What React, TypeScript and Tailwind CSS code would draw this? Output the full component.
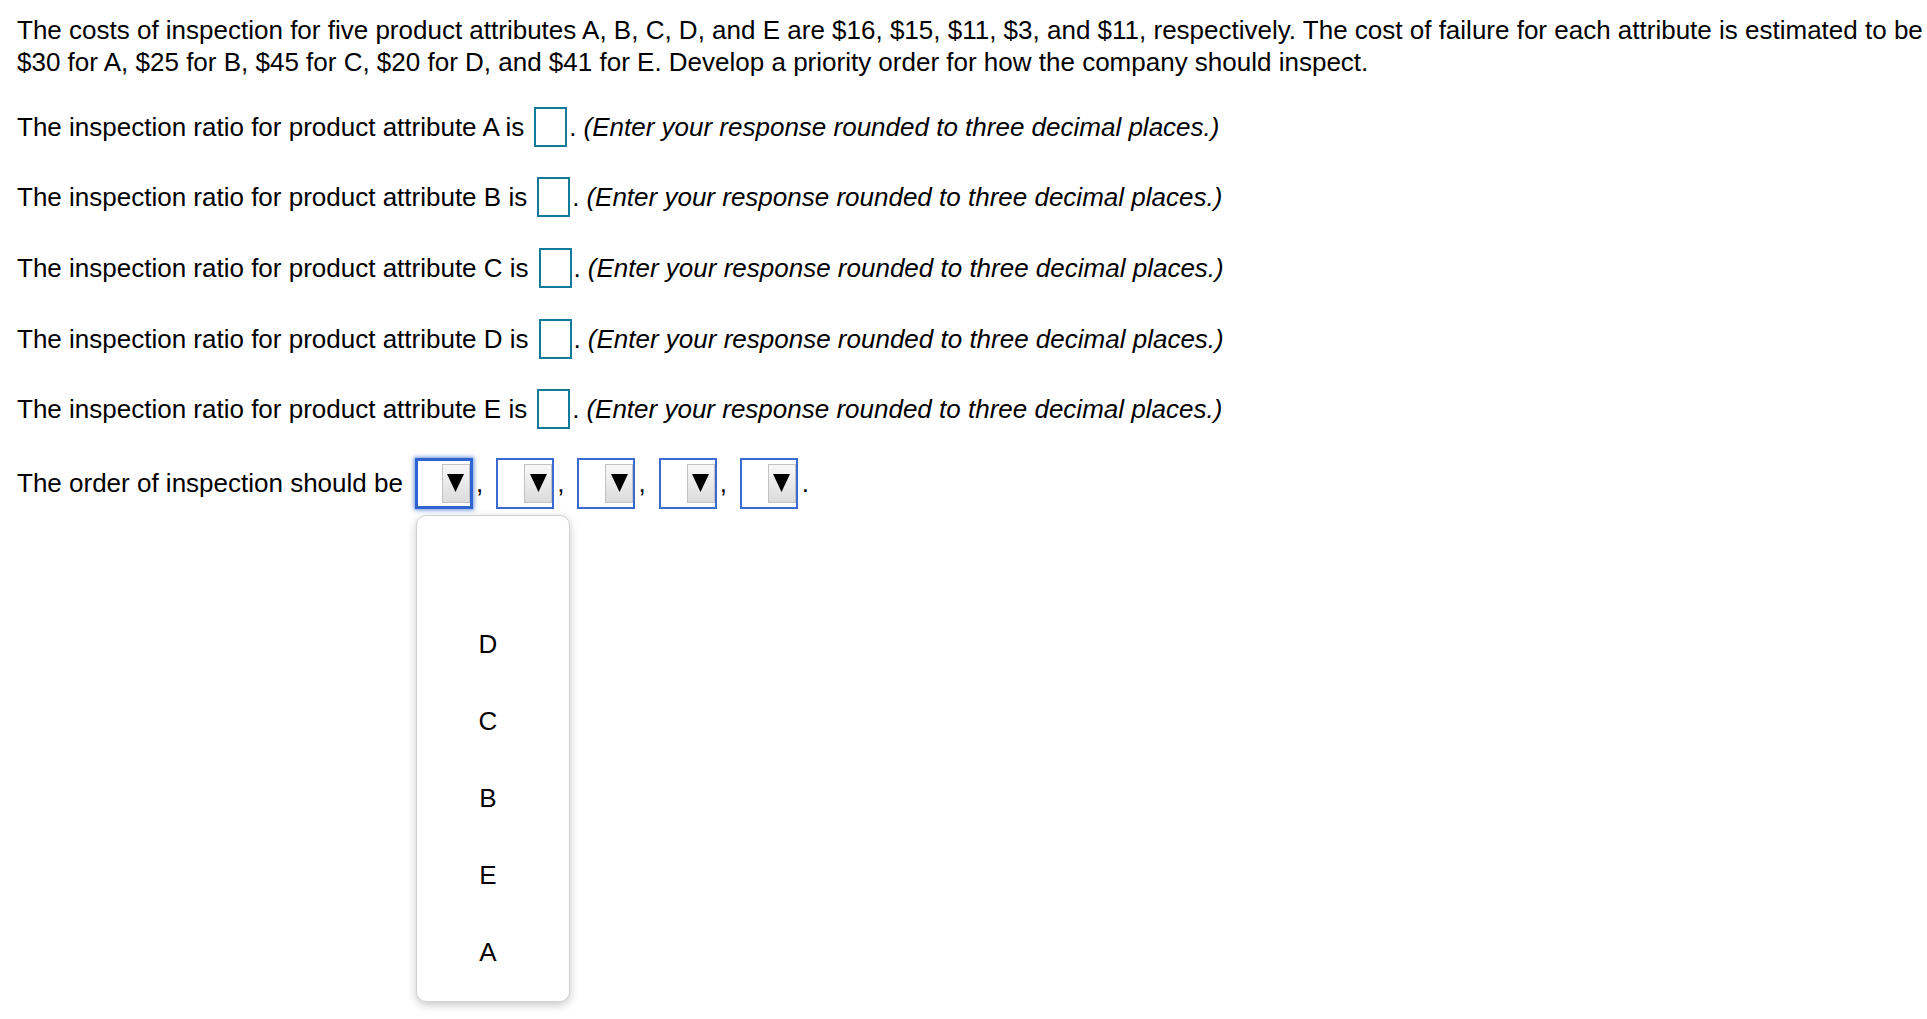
import React from "react";

const attrs = ["A", "B", "C", "D", "E"];
const options = ["", "D", "C", "B", "E", "A"];

function Arrow() {
    return (
        <svg width="17" height="18" viewBox="0 0 17 18">
            <polygon points="0,0 17,0 8.5,18" fill="#000" />
        </svg>
    );
}

function SelectBox({ focused }: { focused?: boolean }) {
    return (
        <div
            className={`w-[58px] h-[51px] bg-white flex items-center justify-end ${
                focused
                    ? "border-[3px] border-[#2f63cf] shadow-[0_0_4px_1px_rgba(47,99,207,0.7)]"
                    : "border-2 border-[#3a6bd0]"
            }`}
        >
            <div className="w-[28px] h-[39px] border border-[#c2c2c2] bg-linear-to-b from-[#f8f8f8] to-[#dcdcdc] flex items-center justify-center">
                <Arrow />
            </div>
        </div>
    );
}

function RatioRow({ attr }: { attr: string }) {
    return (
        <div className="flex items-center h-[40px] whitespace-nowrap">
            <span>The inspection ratio for product attribute {attr} is</span>
            <div className="ml-[10px] w-[33px] h-[40px] border-2 border-[#127a9b] bg-white" />
            <span className="ml-[2px]">.</span>
            <span className="ml-[7px] italic">(Enter your response rounded to three decimal places.)</span>
        </div>
    );
}

export default function App() {
    return (
        <div className="w-full h-screen overflow-hidden bg-white text-black font-['Liberation_Sans',Arial,sans-serif] text-[26px] leading-[32px]">
            <div className="pl-[17px] pt-[14px]">
                {/* Problem statement */}
                <p className="whitespace-nowrap">
                    The costs of inspection for five product attributes A, B, C, D, and E are $16, $15, $11, $3, and $11, respectively. The cost of failure for each attribute is estimated to be
                    <br />
                    $30 for A, $25 for B, $45 for C, $20 for D, and $41 for E. Develop a priority order for how the company should inspect.
                </p>

                {/* Ratio inputs */}
                <div className="mt-[28.5px] flex flex-col gap-[30.7px]">
                    {attrs.map((a) => (
                        <RatioRow key={a} attr={a} />
                    ))}
                </div>

                {/* Order of inspection */}
                <div className="mt-[28.7px] flex items-center h-[51px] whitespace-nowrap">
                    <span>The order of inspection should be</span>
                    {attrs.map((a, i) => (
                        <div key={a} className={`flex items-center ${i === 0 ? "ml-[12px]" : "ml-[13px]"}`}>
                            <div className="relative">
                                <SelectBox focused={i === 0} />
                                {i === 0 && (
                                    <div className="absolute left-[1px] top-[57px] w-[154px] h-[487px] bg-white border border-[#d2d2d2] rounded-[10px] shadow-[0_3px_10px_rgba(0,0,0,0.22)] pt-[13px] z-10">
                                        {options.map((o, j) => (
                                            <div key={j} className="h-[77px] flex items-center justify-center pr-[10px]">
                                                {o}
                                            </div>
                                        ))}
                                    </div>
                                )}
                            </div>
                            <span className={i === 4 ? "ml-[4px]" : "ml-[3px]"}>{i === 4 ? "." : ","}</span>
                        </div>
                    ))}
                </div>
            </div>
        </div>
    );
}
